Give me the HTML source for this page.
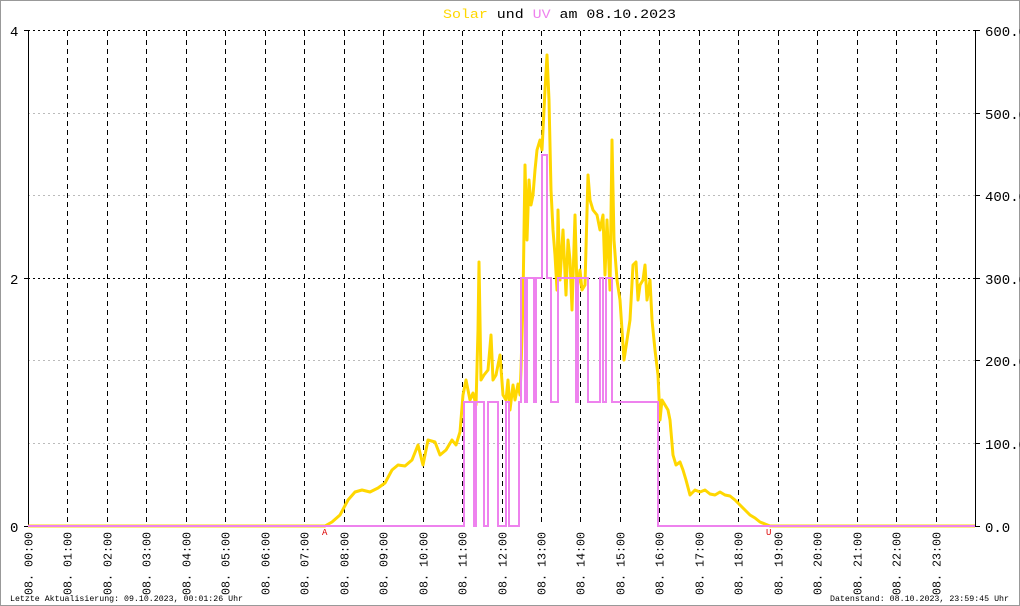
<!DOCTYPE html>
<html><head><meta charset="utf-8"><style>
html,body{margin:0;padding:0;background:#fff}
svg{display:block}
text{font-family:"Liberation Mono","DejaVu Sans Mono",monospace}
</style></head><body>
<svg width="1020" height="606" viewBox="0 0 1020 606" xmlns="http://www.w3.org/2000/svg">
<rect x="0.5" y="0.5" width="1019" height="605" fill="#fff" stroke="#999"/>
<text x="443" y="18" font-size="13" fill="#000" textLength="233" lengthAdjust="spacingAndGlyphs"><tspan fill="#FFD700">Solar</tspan> und <tspan fill="#EE82EE">UV</tspan> am 08.10.2023</text>
<!-- gray minor horizontal -->
<g stroke="#bbb" stroke-dasharray="2,3">
<line x1="28" y1="113.5" x2="975" y2="113.5"/>
<line x1="28" y1="195.5" x2="975" y2="195.5"/>
<line x1="28" y1="360.5" x2="975" y2="360.5"/>
<line x1="28" y1="443.5" x2="975" y2="443.5"/>
</g>
<g stroke="#000" stroke-dasharray="2,3">
<line x1="28" y1="30.5" x2="975" y2="30.5"/>
<line x1="28" y1="278.5" x2="975" y2="278.5"/>
</g>
<g stroke="#000" stroke-dasharray="5,4" id="vl"></g>
<g stroke="#000">
<line x1="28.5" y1="30" x2="28.5" y2="527"/>
<line x1="975.5" y1="30" x2="975.5" y2="527"/>
<line x1="24" y1="30.5" x2="28" y2="30.5"/><line x1="24" y1="278.5" x2="28" y2="278.5"/><line x1="24" y1="526.5" x2="28" y2="526.5"/>
<line x1="975" y1="30.5" x2="980" y2="30.5"/><line x1="975" y1="113.5" x2="980" y2="113.5"/><line x1="975" y1="195.5" x2="980" y2="195.5"/><line x1="975" y1="278.5" x2="980" y2="278.5"/><line x1="975" y1="360.5" x2="980" y2="360.5"/><line x1="975" y1="443.5" x2="980" y2="443.5"/><line x1="975" y1="526.5" x2="980" y2="526.5"/>
</g>
<g font-size="14" fill="#000">
<text x="10" y="36">4</text><text x="10" y="284">2</text><text x="10" y="532">0</text>
<text x="985" y="36">600.0</text><text x="985" y="119">500.0</text><text x="985" y="201">400.0</text><text x="985" y="284">300.0</text><text x="985" y="366">200.0</text><text x="985" y="449">100.0</text><text x="985" y="532">0.0</text>
</g>
<polyline fill="none" stroke="#FFD700" stroke-width="3" stroke-linejoin="round" points="28,526 325,526 332,522 340,515 348,500 355,492 362,490 370,492 378,488 385,483 392,470 398,465 405,466 412,460 418,445 423,465 428,440 435,442 440,455 446,450 452,440 456,445 460,432 463,395 466,380 470,400 473,393 476,405 478,330 479,262 481,380 484,375 488,370 491,335 493,380 496,375 500,355 503,395 506,400 508,380 510,410 513,385 515,400 518,384 520,395 521,370 523,300 525,165 527,240 529,180 531,205 533,195 535,170 537,150 540,140 542,150 545,90 547,55 549,100 551,190 553,230 555,255 557,290 558,210 560,280 563,230 566,295 568,240 570,260 572,310 575,215 577,290 580,270 582,290 585,285 588,175 590,200 593,210 597,215 600,230 603,215 605,275 607,220 610,290 612,140 614,240 617,280 620,300 622,330 624,360 627,340 630,320 633,265 636,262 638,300 640,285 643,280 645,265 647,300 650,280 652,320 655,350 658,375 660,420 662,400 665,405 668,410 670,420 673,455 676,465 680,462 683,470 686,480 690,495 695,490 700,492 705,490 710,494 715,495 720,492 725,495 730,496 735,500 740,505 745,510 750,515 755,518 760,522 765,524 770,526 975,526"/>
<path fill="none" stroke="#EE82EE" stroke-width="2" d="M28,526 H464 V402 H474 V526 H476 V402 H484 V526 H488 V402 H498 V526 H506 V402 H509 V526 H519 V402 H521 V278 H525 V402 H527 V278 H534 V402 H536 V278 H542 V155 H547 V278 H551 V402 H558 V278 H576 V402 H578 V278 H588 V402 H600 V278 H603 V402 H606 V278 H612 V402 H658 V526 H975"/>
<text x="322" y="535" font-size="9" fill="#d00">A</text>
<text x="766" y="535" font-size="9" fill="#d00">U</text>
<g id="xl" font-size="11.5" fill="#000"></g>
<text x="10" y="601" font-size="8.3" fill="#000" textLength="233" lengthAdjust="spacingAndGlyphs">Letzte Aktualisierung: 09.10.2023, 00:01:26 Uhr</text>
<text x="830" y="601" font-size="8.3" fill="#000" textLength="179" lengthAdjust="spacingAndGlyphs">Datenstand: 08.10.2023, 23:59:45 Uhr</text>
<script>
var ns="http://www.w3.org/2000/svg",vl=document.getElementById("vl"),xl=document.getElementById("xl");
for(var h=0;h<24;h++){var x=Math.round(28+h*39.46)+0.5;
if(h>0){var l=document.createElementNS(ns,"line");l.setAttribute("x1",x);l.setAttribute("x2",x);l.setAttribute("y1",31);l.setAttribute("y2",526);vl.appendChild(l);}
var t=document.createElementNS(ns,"text");t.setAttribute("transform","translate("+(x+4)+",595) rotate(-90)");t.setAttribute("textLength","63");t.setAttribute("lengthAdjust","spacingAndGlyphs");
t.textContent="08. "+(h<10?"0":"")+h+":00";xl.appendChild(t);}
</script>
</svg>
</body></html>
